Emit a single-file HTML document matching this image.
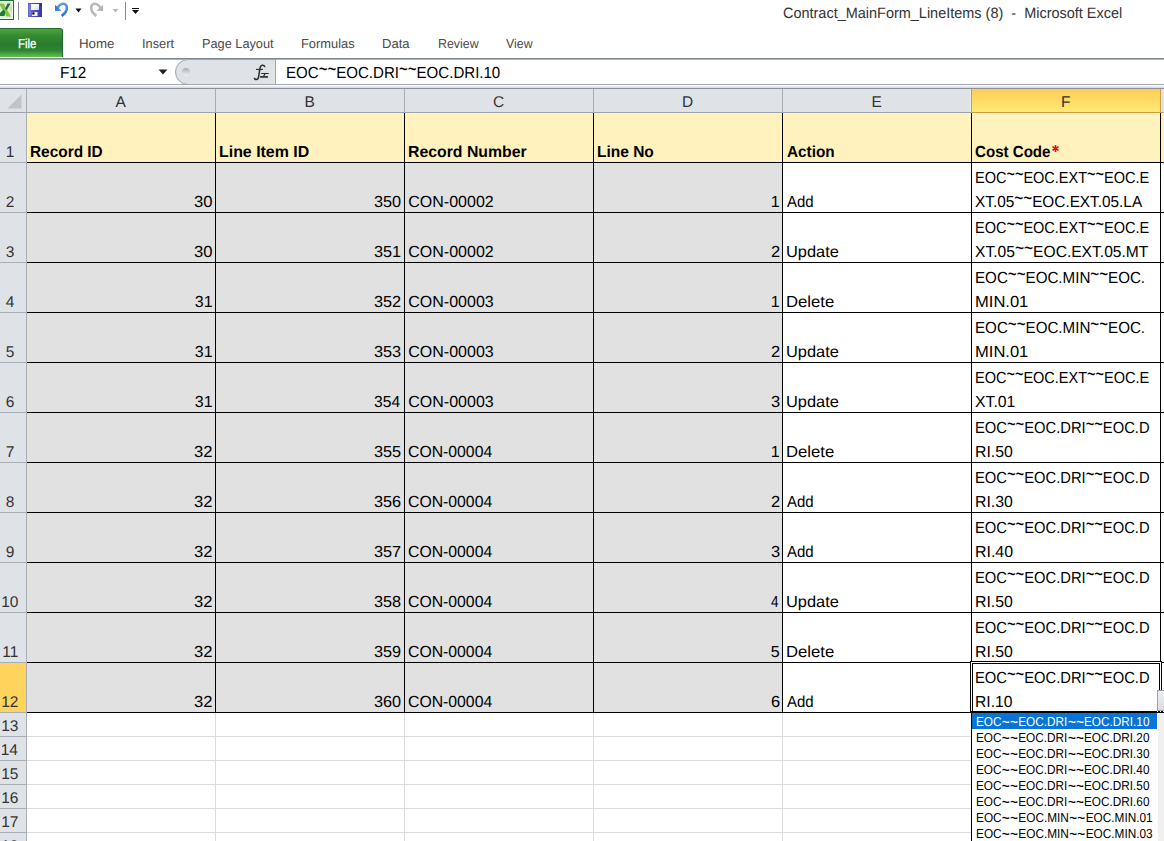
<!DOCTYPE html>
<html><head><meta charset="utf-8"><style>
html,body{margin:0;padding:0;}
body{width:1164px;height:841px;overflow:hidden;position:relative;background:#fff;font-family:"Liberation Sans",sans-serif;text-rendering:geometricPrecision;}
.r{position:absolute;}
.tw{display:inline-block;margin:0 0.8px;transform:scale(1.15,1.4);transform-origin:50% 7px;}
.tl{display:inline-block;position:relative;top:-3px;transform:scaleY(1.35);transform-origin:50% 8px;}
.t{position:absolute;white-space:pre;line-height:1;transform-origin:0 0;font-family:"Liberation Sans",sans-serif;}
</style></head><body>
<div class="r" style="left:0px;top:0px;width:1164px;height:58px;background:#ffffff;"></div>
<svg class="r" style="left:0;top:0" width="150" height="24">
<rect x="-2" y="0" width="16" height="20" fill="#1f7030"/>
<rect x="-1" y="1" width="14" height="18" fill="#f4faf0"/>
<rect x="-1" y="2" width="13" height="16" fill="#dcefd2"/>
<path d="M9 7.5 L12 5 L12 13 Z" fill="#bfe3b0"/>
<path d="M-1 3.5 L3.5 3.5 L11 16.5 L6.5 16.5 Z" fill="#86c441"/>
<path d="M5 9 L7.5 3.5 L10.5 3.5 L6.8 10.2 Z" fill="#2d6a3a"/>
<path d="M-1 16 L4.5 16 L5.2 12 L3.6 9.5 L-1 14 Z" fill="#1c7a35"/>
<rect x="18" y="2" width="1" height="18" fill="#8a8a8a"/>
<defs><linearGradient id="sg" x1="0" x2="1" y1="0" y2="0"><stop offset="0" stop-color="#8a8ef0"/><stop offset="0.35" stop-color="#5559d0"/><stop offset="1" stop-color="#3538a6"/></linearGradient>
<linearGradient id="lg" x1="0" x2="1" y1="0" y2="1"><stop offset="0" stop-color="#ffffff"/><stop offset="0.6" stop-color="#f0f3fb"/><stop offset="1" stop-color="#c4cce8"/></linearGradient>
<linearGradient id="ug" x1="0" x2="0" y1="0" y2="1"><stop offset="0" stop-color="#5b9af0"/><stop offset="1" stop-color="#2f6fdc"/></linearGradient></defs>
<rect x="28" y="3" width="14" height="14" fill="url(#sg)"/>
<rect x="28.5" y="3.5" width="13" height="13" fill="none" stroke="#3a3c9c" stroke-width="0.6" opacity="0.7"/>
<rect x="31" y="4" width="8" height="6" fill="url(#lg)"/>
<rect x="32" y="12" width="5.5" height="4" fill="#f2f2f2"/>
<rect x="32.3" y="12.3" width="2.2" height="2.2" fill="#000"/>
<rect x="40" y="4.5" width="1" height="1.2" fill="#1a1a50"/>
<path d="M57.6 8.2 C59 4.8 62 3.3 64.6 4.1 C67.2 5 67.6 9 65.6 12 C64.6 13.5 63.1 14.8 61.6 15.8" fill="none" stroke="url(#ug)" stroke-width="2.6"/>
<path d="M55 4.8 L55 11 L61.5 10.8 Z" fill="#3a7ee2"/>
<path d="M75.5 8.5 L81.5 8.5 L78.5 12.5 Z" fill="#111"/>
<path d="M100.4 8.2 C99 4.8 96 3.3 93.4 4.1 C90.8 5 90.4 9 92.4 12 C93.4 13.5 94.9 14.8 96.4 15.8" fill="none" stroke="#b9b9b9" stroke-width="2.6"/>
<path d="M103 4.8 L103 11 L96.5 10.8 Z" fill="#b4b4b4"/>
<path d="M112.5 9 L118.5 9 L115.5 12.5 Z" fill="#b8b8b8"/>
<rect x="125" y="2" width="1" height="18" fill="#8a8a8a"/>
<rect x="132" y="8" width="7" height="1" fill="#111"/>
<path d="M132 10 L139 10 L135.5 14 Z" fill="#111"/>
</svg>
<div class="t" style="left:782.54px;top:6.00px;font-size:15px;font-weight:normal;color:#333333;transform:scaleX(0.9643);">Contract_MainForm_LineItems (8)  -  Microsoft Excel</div>
<div class="r" style="left:-2px;top:28px;width:65px;height:29px;box-sizing:border-box;border-top:1px solid #236f2c;border-right:1px solid #1f6a2a;border-radius:0 3px 0 0;background:linear-gradient(#4fa33f 0%,#338a33 25%,#2a7b2d 55%,#2f8731 78%,#4faf42 92%,#66c24c 100%);"></div>
<div class="t" style="left:17.62px;top:37.00px;font-size:13px;font-weight:normal;color:#ffffff;transform:scaleX(0.8750);-webkit-text-stroke:0.3px #fff;">File</div>
<div class="t" style="left:79.48px;top:37.00px;font-size:13px;font-weight:normal;color:#4a4a4a;transform:scaleX(1.0242);">Home</div>
<div class="t" style="left:142.12px;top:37.00px;font-size:13px;font-weight:normal;color:#4a4a4a;transform:scaleX(0.9844);">Insert</div>
<div class="t" style="left:202.42px;top:37.00px;font-size:13px;font-weight:normal;color:#4a4a4a;transform:scaleX(0.9806);">Page Layout</div>
<div class="t" style="left:301.31px;top:37.00px;font-size:13px;font-weight:normal;color:#4a4a4a;transform:scaleX(0.9906);">Formulas</div>
<div class="t" style="left:382.40px;top:37.00px;font-size:13px;font-weight:normal;color:#4a4a4a;transform:scaleX(1.0038);">Data</div>
<div class="t" style="left:437.55px;top:37.00px;font-size:13px;font-weight:normal;color:#4a4a4a;transform:scaleX(0.9537);">Review</div>
<div class="t" style="left:506.20px;top:37.00px;font-size:13px;font-weight:normal;color:#4a4a4a;transform:scaleX(0.9500);">View</div>
<div class="r" style="left:0px;top:58px;width:1164px;height:1px;background:#7f8790;"></div>
<div class="r" style="left:0px;top:59px;width:1164px;height:1px;background:#adb3ba;"></div>
<div class="r" style="left:0px;top:60px;width:1164px;height:24px;background:#ffffff;"></div>
<div class="t" style="left:59.65px;top:66.00px;font-size:16px;font-weight:normal;color:#000;transform:scaleX(0.9538);">F12</div>
<svg class="r" style="left:158px;top:69px" width="11" height="7"><path d="M0.5 0.5 L9.5 0.5 L5 5.5 Z" fill="#222"/></svg>
<div class="r" style="left:175px;top:59px;border:1px solid #a0a6ad;border-radius:13px 0 0 13px;background:#dfe2e6;box-sizing:border-box;width:101px;height:26px"></div>
<div class="r" style="left:182px;top:68px;width:8px;height:8px;border-radius:50%;background:linear-gradient(#a8acb1,#d4d7db 60%,#f2f3f4)"></div>
<svg class="r" style="left:250px;top:62px" width="24" height="20"><g fill="none" stroke="#2b2b2b">
<path d="M14.6 5.2 C14.9 3.6 13.4 3 12 3.3 C10.6 3.7 10.1 5 9.9 6.6 L8.6 14.8 C8.3 16.6 7.3 17.6 5.8 17.4 C4.6 17.2 4.4 16.4 4.6 15.8" stroke-width="1.5"/>
<path d="M6 7.4 H12.9" stroke-width="1.1"/>
<path d="M11.2 11.5 H18.7" stroke-width="1"/>
<path d="M15.2 11.8 L13.4 14.4" stroke-width="1.1"/>
<path d="M10.1 14.9 H17.9" stroke-width="1.7"/>
</g></svg>
<div class="t" style="left:286.06px;top:66.00px;font-size:16px;font-weight:normal;color:#000;transform:scaleX(0.9412);">EOC<span class="tl">~</span><span class="tl">~</span>EOC.DRI<span class="tl">~</span><span class="tl">~</span>EOC.DRI.10</div>
<div class="r" style="left:0px;top:84px;width:1164px;height:1px;background:#a4a9af;"></div>
<div class="r" style="left:0px;top:85px;width:1164px;height:1px;background:#fbfbfd;"></div>
<div class="r" style="left:0px;top:86px;width:1164px;height:1px;background:#e8ebf3;"></div>
<div class="r" style="left:0px;top:87px;width:1164px;height:1px;background:#d8deea;"></div>
<div class="r" style="left:0px;top:88px;width:1164px;height:1px;background:#8e9296;"></div>
<div class="r" style="left:0px;top:89px;width:1164px;height:23px;background:#dfe3e8;"></div>
<div class="r" style="left:0px;top:112px;width:1164px;height:1px;background:#9ea3a9;"></div>
<svg class="r" style="left:7px;top:94px" width="16" height="16"><path d="M0.5 14.5 L14.5 0.5 L14.5 14.5 Z" fill="#c0c4c9"/></svg>
<div class="r" style="left:26px;top:89px;width:1px;height:23px;background:#a9aeb4;"></div>
<div class="r" style="left:215px;top:89px;width:1px;height:23px;background:#a9aeb4;"></div>
<div class="r" style="left:404px;top:89px;width:1px;height:23px;background:#a9aeb4;"></div>
<div class="r" style="left:593px;top:89px;width:1px;height:23px;background:#a9aeb4;"></div>
<div class="r" style="left:782px;top:89px;width:1px;height:23px;background:#a9aeb4;"></div>
<div class="r" style="left:971px;top:89px;width:1px;height:23px;background:#a9aeb4;"></div>
<div class="r" style="left:1160px;top:89px;width:1px;height:23px;background:#a9aeb4;"></div>
<div class="r" style="left:971px;top:89px;width:189px;height:23px;background:linear-gradient(#fbcd57,#ffea76);"></div>
<div class="r" style="left:971px;top:112px;width:190px;height:1px;background:#d19a3a;"></div>
<div class="r" style="left:971px;top:89px;width:1px;height:24px;background:#d39b3c;"></div>
<div class="r" style="left:970px;top:89px;width:1px;height:23px;background:#e9edf4;"></div>
<div class="r" style="left:1160px;top:89px;width:1px;height:24px;background:#d19a3a;"></div>
<div class="t" style="left:115.50px;top:95.00px;font-size:15.5px;font-weight:normal;color:#333333;">A</div>
<div class="t" style="left:304.50px;top:95.00px;font-size:15.5px;font-weight:normal;color:#333333;">B</div>
<div class="t" style="left:493.00px;top:95.00px;font-size:15.5px;font-weight:normal;color:#333333;">C</div>
<div class="t" style="left:682.00px;top:95.00px;font-size:15.5px;font-weight:normal;color:#333333;">D</div>
<div class="t" style="left:871.50px;top:95.00px;font-size:15.5px;font-weight:normal;color:#333333;">E</div>
<div class="t" style="left:1061.00px;top:95.00px;font-size:15.5px;font-weight:normal;color:#333333;">F</div>
<div class="r" style="left:0px;top:113px;width:26px;height:728px;background:#dfe3e8;"></div>
<div class="r" style="left:26px;top:113px;width:1px;height:728px;background:#a9aeb4;"></div>
<div class="r" style="left:0px;top:663px;width:26px;height:49px;background:#ffd45d;"></div>
<div class="r" style="left:0px;top:162px;width:26px;height:1px;background:#a9aeb4;"></div>
<div class="r" style="left:0px;top:212px;width:26px;height:1px;background:#a9aeb4;"></div>
<div class="r" style="left:0px;top:262px;width:26px;height:1px;background:#a9aeb4;"></div>
<div class="r" style="left:0px;top:312px;width:26px;height:1px;background:#a9aeb4;"></div>
<div class="r" style="left:0px;top:362px;width:26px;height:1px;background:#a9aeb4;"></div>
<div class="r" style="left:0px;top:412px;width:26px;height:1px;background:#a9aeb4;"></div>
<div class="r" style="left:0px;top:462px;width:26px;height:1px;background:#a9aeb4;"></div>
<div class="r" style="left:0px;top:512px;width:26px;height:1px;background:#a9aeb4;"></div>
<div class="r" style="left:0px;top:562px;width:26px;height:1px;background:#a9aeb4;"></div>
<div class="r" style="left:0px;top:612px;width:26px;height:1px;background:#a9aeb4;"></div>
<div class="r" style="left:0px;top:662px;width:26px;height:1px;background:#a9aeb4;"></div>
<div class="r" style="left:0px;top:712px;width:26px;height:1px;background:#a9aeb4;"></div>
<div class="r" style="left:0px;top:736px;width:26px;height:1px;background:#a9aeb4;"></div>
<div class="r" style="left:0px;top:760px;width:26px;height:1px;background:#a9aeb4;"></div>
<div class="r" style="left:0px;top:784px;width:26px;height:1px;background:#a9aeb4;"></div>
<div class="r" style="left:0px;top:808px;width:26px;height:1px;background:#a9aeb4;"></div>
<div class="r" style="left:0px;top:832px;width:26px;height:1px;background:#a9aeb4;"></div>
<div class="r" style="left:0px;top:856px;width:26px;height:1px;background:#a9aeb4;"></div>
<div class="t" style="left:5.70px;top:145.00px;font-size:15.5px;font-weight:normal;color:#333333;">1</div>
<div class="t" style="left:5.70px;top:195.00px;font-size:15.5px;font-weight:normal;color:#333333;">2</div>
<div class="t" style="left:5.70px;top:245.00px;font-size:15.5px;font-weight:normal;color:#333333;">3</div>
<div class="t" style="left:5.70px;top:295.00px;font-size:15.5px;font-weight:normal;color:#333333;">4</div>
<div class="t" style="left:5.70px;top:345.00px;font-size:15.5px;font-weight:normal;color:#333333;">5</div>
<div class="t" style="left:5.70px;top:395.00px;font-size:15.5px;font-weight:normal;color:#333333;">6</div>
<div class="t" style="left:5.70px;top:445.00px;font-size:15.5px;font-weight:normal;color:#333333;">7</div>
<div class="t" style="left:5.70px;top:495.00px;font-size:15.5px;font-weight:normal;color:#333333;">8</div>
<div class="t" style="left:5.70px;top:545.00px;font-size:15.5px;font-weight:normal;color:#333333;">9</div>
<div class="t" style="left:1.20px;top:595.00px;font-size:15.5px;font-weight:normal;color:#333333;">10</div>
<div class="t" style="left:2.20px;top:645.00px;font-size:15.5px;font-weight:normal;color:#333333;">11</div>
<div class="t" style="left:1.20px;top:695.00px;font-size:15.5px;font-weight:normal;color:#333333;">12</div>
<div class="t" style="left:1.20px;top:719.00px;font-size:15.5px;font-weight:normal;color:#333333;">13</div>
<div class="t" style="left:0.70px;top:743.00px;font-size:15.5px;font-weight:normal;color:#333333;">14</div>
<div class="t" style="left:1.20px;top:767.00px;font-size:15.5px;font-weight:normal;color:#333333;">15</div>
<div class="t" style="left:1.20px;top:791.00px;font-size:15.5px;font-weight:normal;color:#333333;">16</div>
<div class="t" style="left:1.20px;top:815.00px;font-size:15.5px;font-weight:normal;color:#333333;">17</div>
<div class="t" style="left:1.20px;top:839.00px;font-size:15.5px;font-weight:normal;color:#333333;">18</div>
<div class="r" style="left:27px;top:113px;width:1137px;height:49px;background:#fff2be;"></div>
<div class="r" style="left:27px;top:163px;width:755px;height:549px;background:#e1e1e1;"></div>
<div class="r" style="left:783px;top:163px;width:381px;height:549px;background:#ffffff;"></div>
<div class="r" style="left:27px;top:713px;width:1137px;height:128px;background:#ffffff;"></div>
<div class="r" style="left:27px;top:736px;width:1137px;height:1px;background:#dadcdd;"></div>
<div class="r" style="left:27px;top:760px;width:1137px;height:1px;background:#dadcdd;"></div>
<div class="r" style="left:27px;top:784px;width:1137px;height:1px;background:#dadcdd;"></div>
<div class="r" style="left:27px;top:808px;width:1137px;height:1px;background:#dadcdd;"></div>
<div class="r" style="left:27px;top:832px;width:1137px;height:1px;background:#dadcdd;"></div>
<div class="r" style="left:27px;top:856px;width:1137px;height:1px;background:#dadcdd;"></div>
<div class="r" style="left:215px;top:713px;width:1px;height:128px;background:#dadcdd;"></div>
<div class="r" style="left:404px;top:713px;width:1px;height:128px;background:#dadcdd;"></div>
<div class="r" style="left:593px;top:713px;width:1px;height:128px;background:#dadcdd;"></div>
<div class="r" style="left:782px;top:713px;width:1px;height:128px;background:#dadcdd;"></div>
<div class="r" style="left:971px;top:713px;width:1px;height:128px;background:#dadcdd;"></div>
<div class="r" style="left:1160px;top:713px;width:1px;height:128px;background:#dadcdd;"></div>
<div class="r" style="left:27px;top:162px;width:1137px;height:1px;background:#000;"></div>
<div class="r" style="left:27px;top:212px;width:1137px;height:1px;background:#000;"></div>
<div class="r" style="left:27px;top:262px;width:1137px;height:1px;background:#000;"></div>
<div class="r" style="left:27px;top:312px;width:1137px;height:1px;background:#000;"></div>
<div class="r" style="left:27px;top:362px;width:1137px;height:1px;background:#000;"></div>
<div class="r" style="left:27px;top:412px;width:1137px;height:1px;background:#000;"></div>
<div class="r" style="left:27px;top:462px;width:1137px;height:1px;background:#000;"></div>
<div class="r" style="left:27px;top:512px;width:1137px;height:1px;background:#000;"></div>
<div class="r" style="left:27px;top:562px;width:1137px;height:1px;background:#000;"></div>
<div class="r" style="left:27px;top:612px;width:1137px;height:1px;background:#000;"></div>
<div class="r" style="left:27px;top:662px;width:1137px;height:1px;background:#000;"></div>
<div class="r" style="left:27px;top:712px;width:1137px;height:1px;background:#000;"></div>
<div class="r" style="left:215px;top:113px;width:1px;height:600px;background:#000;"></div>
<div class="r" style="left:404px;top:113px;width:1px;height:600px;background:#000;"></div>
<div class="r" style="left:593px;top:113px;width:1px;height:600px;background:#000;"></div>
<div class="r" style="left:782px;top:113px;width:1px;height:600px;background:#000;"></div>
<div class="r" style="left:971px;top:113px;width:1px;height:600px;background:#000;"></div>
<div class="r" style="left:1160px;top:113px;width:1px;height:600px;background:#000;"></div>
<div class="r" style="left:26px;top:113px;width:1px;height:0px;background:#000;"></div>
<div class="t" style="left:30.14px;top:145.00px;font-size:16px;font-weight:bold;color:#000;transform:scaleX(0.9622);">Record ID</div>
<div class="t" style="left:218.91px;top:145.00px;font-size:16px;font-weight:bold;color:#000;transform:scaleX(0.9944);">Line Item ID</div>
<div class="t" style="left:408.01px;top:145.00px;font-size:16px;font-weight:bold;color:#000;transform:scaleX(0.9891);">Record Number</div>
<div class="t" style="left:597.23px;top:145.00px;font-size:16px;font-weight:bold;color:#000;transform:scaleX(0.9684);">Line No</div>
<div class="t" style="left:786.80px;top:145.00px;font-size:16px;font-weight:bold;color:#000;transform:scaleX(0.9571);">Action</div>
<div class="t" style="left:975.36px;top:145.00px;font-size:16px;font-weight:bold;color:#000;transform:scaleX(0.9436);">Cost Code</div>
<svg class="r" style="left:1051px;top:144px" width="9" height="9"><g stroke="#ff0000" stroke-width="1.6" stroke-linecap="butt"><path d="M4.5 1 V8"/><path d="M1.5 2.6 L7.5 6.4"/><path d="M7.5 2.6 L1.5 6.4"/></g></svg>
<div class="t" style="left:194.16px;top:195.00px;font-size:16px;font-weight:normal;color:#000;transform:scaleX(1.0375);">30</div>
<div class="t" style="left:374.38px;top:195.00px;font-size:16px;font-weight:normal;color:#000;transform:scaleX(1.0160);">350</div>
<div class="t" style="left:770.80px;top:195.00px;font-size:16px;font-weight:normal;color:#000;">1</div>
<div class="t" style="left:408.30px;top:195.00px;font-size:16px;font-weight:normal;color:#000;">CON-00002</div>
<div class="t" style="left:787.30px;top:195.00px;font-size:16px;font-weight:normal;color:#000;transform:scaleX(0.9357);">Add</div>
<div class="t" style="left:975.39px;top:171.00px;font-size:16px;font-weight:normal;color:#000;transform:scaleX(0.9068);">EOC<span class="tl">~</span><span class="tl">~</span>EOC.EXT<span class="tl">~</span><span class="tl">~</span>EOC.E</div>
<div class="t" style="left:975.34px;top:195.00px;font-size:16px;font-weight:normal;color:#000;transform:scaleX(0.9586);">XT.05<span class="tl">~</span><span class="tl">~</span>EOC.EXT.05.LA</div>
<div class="t" style="left:194.16px;top:245.00px;font-size:16px;font-weight:normal;color:#000;transform:scaleX(1.0375);">30</div>
<div class="t" style="left:374.38px;top:245.00px;font-size:16px;font-weight:normal;color:#000;transform:scaleX(1.0160);">351</div>
<div class="t" style="left:770.57px;top:245.00px;font-size:16px;font-weight:normal;color:#000;transform:scaleX(1.0286);">2</div>
<div class="t" style="left:408.30px;top:245.00px;font-size:16px;font-weight:normal;color:#000;">CON-00002</div>
<div class="t" style="left:786.28px;top:245.00px;font-size:16px;font-weight:normal;color:#000;transform:scaleX(1.0240);">Update</div>
<div class="t" style="left:975.39px;top:221.00px;font-size:16px;font-weight:normal;color:#000;transform:scaleX(0.9068);">EOC<span class="tl">~</span><span class="tl">~</span>EOC.EXT<span class="tl">~</span><span class="tl">~</span>EOC.E</div>
<div class="t" style="left:975.33px;top:245.00px;font-size:16px;font-weight:normal;color:#000;transform:scaleX(0.9746);">XT.05<span class="tl">~</span><span class="tl">~</span>EOC.EXT.05.MT</div>
<div class="t" style="left:194.80px;top:295.00px;font-size:16px;font-weight:normal;color:#000;">31</div>
<div class="t" style="left:374.38px;top:295.00px;font-size:16px;font-weight:normal;color:#000;transform:scaleX(1.0160);">352</div>
<div class="t" style="left:770.80px;top:295.00px;font-size:16px;font-weight:normal;color:#000;">1</div>
<div class="t" style="left:408.30px;top:295.00px;font-size:16px;font-weight:normal;color:#000;">CON-00003</div>
<div class="t" style="left:786.26px;top:295.00px;font-size:16px;font-weight:normal;color:#000;transform:scaleX(1.0432);">Delete</div>
<div class="t" style="left:975.35px;top:271.00px;font-size:16px;font-weight:normal;color:#000;transform:scaleX(0.9469);">EOC<span class="tl">~</span><span class="tl">~</span>EOC.MIN<span class="tl">~</span><span class="tl">~</span>EOC.</div>
<div class="t" style="left:975.27px;top:295.00px;font-size:16px;font-weight:normal;color:#000;transform:scaleX(1.0340);">MIN.01</div>
<div class="t" style="left:194.80px;top:345.00px;font-size:16px;font-weight:normal;color:#000;">31</div>
<div class="t" style="left:374.38px;top:345.00px;font-size:16px;font-weight:normal;color:#000;transform:scaleX(1.0160);">353</div>
<div class="t" style="left:770.57px;top:345.00px;font-size:16px;font-weight:normal;color:#000;transform:scaleX(1.0286);">2</div>
<div class="t" style="left:408.30px;top:345.00px;font-size:16px;font-weight:normal;color:#000;">CON-00003</div>
<div class="t" style="left:786.28px;top:345.00px;font-size:16px;font-weight:normal;color:#000;transform:scaleX(1.0240);">Update</div>
<div class="t" style="left:975.35px;top:321.00px;font-size:16px;font-weight:normal;color:#000;transform:scaleX(0.9469);">EOC<span class="tl">~</span><span class="tl">~</span>EOC.MIN<span class="tl">~</span><span class="tl">~</span>EOC.</div>
<div class="t" style="left:975.27px;top:345.00px;font-size:16px;font-weight:normal;color:#000;transform:scaleX(1.0340);">MIN.01</div>
<div class="t" style="left:194.80px;top:395.00px;font-size:16px;font-weight:normal;color:#000;">31</div>
<div class="t" style="left:374.42px;top:395.00px;font-size:16px;font-weight:normal;color:#000;transform:scaleX(0.9769);">354</div>
<div class="t" style="left:770.57px;top:395.00px;font-size:16px;font-weight:normal;color:#000;transform:scaleX(1.0286);">3</div>
<div class="t" style="left:408.30px;top:395.00px;font-size:16px;font-weight:normal;color:#000;">CON-00003</div>
<div class="t" style="left:786.28px;top:395.00px;font-size:16px;font-weight:normal;color:#000;transform:scaleX(1.0240);">Update</div>
<div class="t" style="left:975.39px;top:371.00px;font-size:16px;font-weight:normal;color:#000;transform:scaleX(0.9068);">EOC<span class="tl">~</span><span class="tl">~</span>EOC.EXT<span class="tl">~</span><span class="tl">~</span>EOC.E</div>
<div class="t" style="left:975.31px;top:395.00px;font-size:16px;font-weight:normal;color:#000;transform:scaleX(0.9872);">XT.01</div>
<div class="t" style="left:194.16px;top:445.00px;font-size:16px;font-weight:normal;color:#000;transform:scaleX(1.0375);">32</div>
<div class="t" style="left:374.38px;top:445.00px;font-size:16px;font-weight:normal;color:#000;transform:scaleX(1.0160);">355</div>
<div class="t" style="left:770.80px;top:445.00px;font-size:16px;font-weight:normal;color:#000;">1</div>
<div class="t" style="left:408.31px;top:445.00px;font-size:16px;font-weight:normal;color:#000;transform:scaleX(0.9859);">CON-00004</div>
<div class="t" style="left:786.26px;top:445.00px;font-size:16px;font-weight:normal;color:#000;transform:scaleX(1.0432);">Delete</div>
<div class="t" style="left:975.38px;top:421.00px;font-size:16px;font-weight:normal;color:#000;transform:scaleX(0.9218);">EOC<span class="tl">~</span><span class="tl">~</span>EOC.DRI<span class="tl">~</span><span class="tl">~</span>EOC.D</div>
<div class="t" style="left:975.31px;top:445.00px;font-size:16px;font-weight:normal;color:#000;transform:scaleX(0.9889);">RI.50</div>
<div class="t" style="left:194.16px;top:495.00px;font-size:16px;font-weight:normal;color:#000;transform:scaleX(1.0375);">32</div>
<div class="t" style="left:374.38px;top:495.00px;font-size:16px;font-weight:normal;color:#000;transform:scaleX(1.0160);">356</div>
<div class="t" style="left:770.57px;top:495.00px;font-size:16px;font-weight:normal;color:#000;transform:scaleX(1.0286);">2</div>
<div class="t" style="left:408.31px;top:495.00px;font-size:16px;font-weight:normal;color:#000;transform:scaleX(0.9859);">CON-00004</div>
<div class="t" style="left:787.30px;top:495.00px;font-size:16px;font-weight:normal;color:#000;transform:scaleX(0.9357);">Add</div>
<div class="t" style="left:975.38px;top:471.00px;font-size:16px;font-weight:normal;color:#000;transform:scaleX(0.9218);">EOC<span class="tl">~</span><span class="tl">~</span>EOC.DRI<span class="tl">~</span><span class="tl">~</span>EOC.D</div>
<div class="t" style="left:975.31px;top:495.00px;font-size:16px;font-weight:normal;color:#000;transform:scaleX(0.9889);">RI.30</div>
<div class="t" style="left:194.16px;top:545.00px;font-size:16px;font-weight:normal;color:#000;transform:scaleX(1.0375);">32</div>
<div class="t" style="left:374.38px;top:545.00px;font-size:16px;font-weight:normal;color:#000;transform:scaleX(1.0160);">357</div>
<div class="t" style="left:770.57px;top:545.00px;font-size:16px;font-weight:normal;color:#000;transform:scaleX(1.0286);">3</div>
<div class="t" style="left:408.31px;top:545.00px;font-size:16px;font-weight:normal;color:#000;transform:scaleX(0.9859);">CON-00004</div>
<div class="t" style="left:787.30px;top:545.00px;font-size:16px;font-weight:normal;color:#000;transform:scaleX(0.9357);">Add</div>
<div class="t" style="left:975.38px;top:521.00px;font-size:16px;font-weight:normal;color:#000;transform:scaleX(0.9218);">EOC<span class="tl">~</span><span class="tl">~</span>EOC.DRI<span class="tl">~</span><span class="tl">~</span>EOC.D</div>
<div class="t" style="left:975.31px;top:545.00px;font-size:16px;font-weight:normal;color:#000;transform:scaleX(0.9944);">RI.40</div>
<div class="t" style="left:194.16px;top:595.00px;font-size:16px;font-weight:normal;color:#000;transform:scaleX(1.0375);">32</div>
<div class="t" style="left:374.38px;top:595.00px;font-size:16px;font-weight:normal;color:#000;transform:scaleX(1.0160);">358</div>
<div class="t" style="left:771.20px;top:595.00px;font-size:16px;font-weight:normal;color:#000;transform:scaleX(0.8444);">4</div>
<div class="t" style="left:408.31px;top:595.00px;font-size:16px;font-weight:normal;color:#000;transform:scaleX(0.9859);">CON-00004</div>
<div class="t" style="left:786.28px;top:595.00px;font-size:16px;font-weight:normal;color:#000;transform:scaleX(1.0240);">Update</div>
<div class="t" style="left:975.38px;top:571.00px;font-size:16px;font-weight:normal;color:#000;transform:scaleX(0.9218);">EOC<span class="tl">~</span><span class="tl">~</span>EOC.DRI<span class="tl">~</span><span class="tl">~</span>EOC.D</div>
<div class="t" style="left:975.31px;top:595.00px;font-size:16px;font-weight:normal;color:#000;transform:scaleX(0.9889);">RI.50</div>
<div class="t" style="left:194.16px;top:645.00px;font-size:16px;font-weight:normal;color:#000;transform:scaleX(1.0375);">32</div>
<div class="t" style="left:374.38px;top:645.00px;font-size:16px;font-weight:normal;color:#000;transform:scaleX(1.0160);">359</div>
<div class="t" style="left:770.80px;top:645.00px;font-size:16px;font-weight:normal;color:#000;">5</div>
<div class="t" style="left:408.31px;top:645.00px;font-size:16px;font-weight:normal;color:#000;transform:scaleX(0.9859);">CON-00004</div>
<div class="t" style="left:786.26px;top:645.00px;font-size:16px;font-weight:normal;color:#000;transform:scaleX(1.0432);">Delete</div>
<div class="t" style="left:975.38px;top:621.00px;font-size:16px;font-weight:normal;color:#000;transform:scaleX(0.9218);">EOC<span class="tl">~</span><span class="tl">~</span>EOC.DRI<span class="tl">~</span><span class="tl">~</span>EOC.D</div>
<div class="t" style="left:975.31px;top:645.00px;font-size:16px;font-weight:normal;color:#000;transform:scaleX(0.9889);">RI.50</div>
<div class="t" style="left:194.16px;top:695.00px;font-size:16px;font-weight:normal;color:#000;transform:scaleX(1.0375);">32</div>
<div class="t" style="left:374.38px;top:695.00px;font-size:16px;font-weight:normal;color:#000;transform:scaleX(1.0160);">360</div>
<div class="t" style="left:770.57px;top:695.00px;font-size:16px;font-weight:normal;color:#000;transform:scaleX(1.0286);">6</div>
<div class="t" style="left:408.31px;top:695.00px;font-size:16px;font-weight:normal;color:#000;transform:scaleX(0.9859);">CON-00004</div>
<div class="t" style="left:787.30px;top:695.00px;font-size:16px;font-weight:normal;color:#000;transform:scaleX(0.9357);">Add</div>
<div class="t" style="left:975.38px;top:671.00px;font-size:16px;font-weight:normal;color:#000;transform:scaleX(0.9218);">EOC<span class="tl">~</span><span class="tl">~</span>EOC.DRI<span class="tl">~</span><span class="tl">~</span>EOC.D</div>
<div class="t" style="left:975.32px;top:695.00px;font-size:16px;font-weight:normal;color:#000;transform:scaleX(0.9778);">RI.10</div>
<div class="r" style="left:970px;top:661px;width:192px;height:52px;box-sizing:border-box;border:1px solid #000;"></div>
<div class="r" style="left:971px;top:662px;width:190px;height:50px;box-sizing:border-box;border:1px solid #fff;"></div>
<div class="r" style="left:972px;top:663px;width:188px;height:49px;box-sizing:border-box;border:1px solid #000;border-bottom:0"></div>
<div class="r" style="left:970px;top:711px;width:194px;height:2px;background:#000;"></div>
<div class="r" style="left:1157px;top:711px;width:1px;height:1px;background:#fff;"></div>
<div class="r" style="left:1160px;top:711px;width:1px;height:1px;background:#fff;"></div>
<div class="r" style="left:1163px;top:711px;width:1px;height:1px;background:#fff;"></div>
<div class="r" style="left:1157px;top:690px;width:10px;height:21px;box-sizing:border-box;border:1px solid #9ba2aa;background:linear-gradient(#eef0f3,#d8dce2);"></div>
<div class="r" style="left:971px;top:713px;width:1px;height:128px;background:#000;"></div>
<div class="r" style="left:972px;top:713px;width:186px;height:128px;background:#ffffff;"></div>
<div class="r" style="left:1158px;top:713px;width:6px;height:128px;background:#f0f0f0;"></div>
<div class="r" style="left:972px;top:713px;width:185px;height:16px;background:#0a74d6;"></div>
<div class="t" style="left:976.09px;top:715.00px;font-size:13px;font-weight:normal;color:#fff;transform:scaleX(0.9065);">EOC<span class="tw">~</span><span class="tw">~</span>EOC.DRI<span class="tw">~</span><span class="tw">~</span>EOC.DRI.10</div>
<div class="t" style="left:976.09px;top:731.00px;font-size:13px;font-weight:normal;color:#000;transform:scaleX(0.9065);">EOC<span class="tw">~</span><span class="tw">~</span>EOC.DRI<span class="tw">~</span><span class="tw">~</span>EOC.DRI.20</div>
<div class="t" style="left:976.09px;top:747.00px;font-size:13px;font-weight:normal;color:#000;transform:scaleX(0.9065);">EOC<span class="tw">~</span><span class="tw">~</span>EOC.DRI<span class="tw">~</span><span class="tw">~</span>EOC.DRI.30</div>
<div class="t" style="left:976.09px;top:763.00px;font-size:13px;font-weight:normal;color:#000;transform:scaleX(0.9065);">EOC<span class="tw">~</span><span class="tw">~</span>EOC.DRI<span class="tw">~</span><span class="tw">~</span>EOC.DRI.40</div>
<div class="t" style="left:976.09px;top:779.00px;font-size:13px;font-weight:normal;color:#000;transform:scaleX(0.9065);">EOC<span class="tw">~</span><span class="tw">~</span>EOC.DRI<span class="tw">~</span><span class="tw">~</span>EOC.DRI.50</div>
<div class="t" style="left:976.09px;top:795.00px;font-size:13px;font-weight:normal;color:#000;transform:scaleX(0.9065);">EOC<span class="tw">~</span><span class="tw">~</span>EOC.DRI<span class="tw">~</span><span class="tw">~</span>EOC.DRI.60</div>
<div class="t" style="left:976.09px;top:811.00px;font-size:13px;font-weight:normal;color:#000;transform:scaleX(0.9095);">EOC<span class="tw">~</span><span class="tw">~</span>EOC.MIN<span class="tw">~</span><span class="tw">~</span>EOC.MIN.01</div>
<div class="t" style="left:976.09px;top:827.00px;font-size:13px;font-weight:normal;color:#000;transform:scaleX(0.9095);">EOC<span class="tw">~</span><span class="tw">~</span>EOC.MIN<span class="tw">~</span><span class="tw">~</span>EOC.MIN.03</div>
</body></html>
